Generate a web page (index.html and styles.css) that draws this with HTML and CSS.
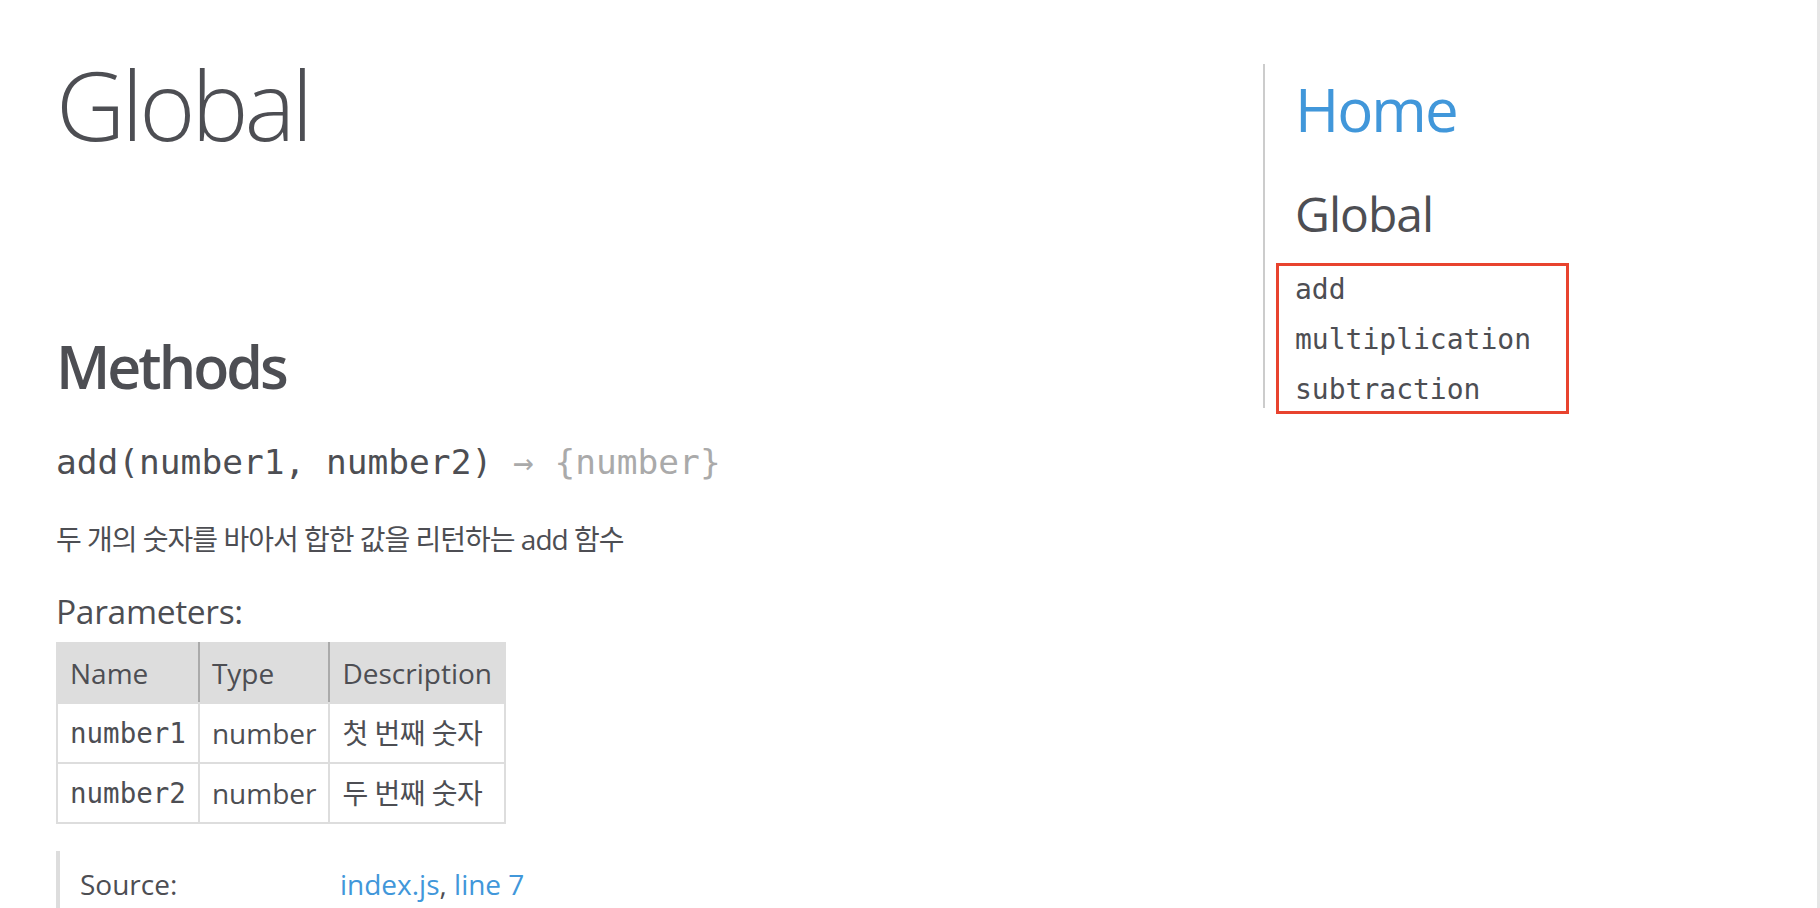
FILE: index.html
```html
<!DOCTYPE html>
<html lang="ko">
<head>
<meta charset="utf-8">
<title>JSDoc: Global</title>
<link rel="stylesheet" href="styles.css">
</head>
<body>
<div class="page">
  <div class="main">
    <h1 class="page-title">Global</h1>
    <section class="doc-section">
      <article>
        <h3 class="subsection-title">Methods</h3>
        <h4 class="name"><span class="fn">add(number1, number2)</span><span class="type-signature"> &rarr; {number}</span></h4>
        <div class="description"><p>두 개의 숫자를 바아서 합한 값을 리턴하는 add 함수</p></div>
        <h5 class="params-title">Parameters:</h5>
        <table class="params">
          <thead>
            <tr><th>Name</th><th>Type</th><th class="last">Description</th></tr>
          </thead>
          <tbody>
            <tr><td class="pname">number1</td><td>number</td><td class="ko">첫 번째 숫자</td></tr>
            <tr><td class="pname">number2</td><td>number</td><td class="ko">두 번째 숫자</td></tr>
          </tbody>
        </table>
        <dl class="details">
          <dt>Source:</dt>
          <dd><a href="#">index.js</a>, <a href="#">line 7</a></dd>
        </dl>
      </article>
    </section>
  </div>
  <nav class="side-nav">
    <h2 class="nav-home"><a href="#">Home</a></h2>
    <h3 class="nav-global">Global</h3>
    <div class="nav-list-wrap">
      <ul class="nav-list">
        <li><a href="#">add</a></li>
        <li><a href="#">multiplication</a></li>
        <li><a href="#">subtraction</a></li>
      </ul>
      <div class="annot"></div>
    </div>
  </nav>
</div>
</body>
</html>
```
FILE: styles.css
```css
html, body {
  margin: 0;
  padding: 0;
  overflow: hidden;
  background: #fff;
}

body {
  font-family: "Open Sans", "Noto Sans CJK KR", sans-serif;
  font-size: 28px;
  line-height: 1.5;
  color: #4d4e53;
}

a {
  color: #4197da;
  text-decoration: none;
}

.page {
  display: grid;
  grid-template-columns: 1255px 1fr;
  align-items: start;
  padding: 8px 0 0 8px;
  min-height: 908px;
  box-sizing: border-box;
  border-right: 3px solid #e6e6e6;
}

.page-title {
  font-family: "Open Sans", sans-serif;
  font-weight: 300;
  font-size: 96px;
  line-height: 144px;
  letter-spacing: -4px;
  margin: 24px 48px 40px;
}

.doc-section {
  padding: 24px 48px;
  margin-right: 60px;
}

.subsection-title {
  font-size: 59px;
  line-height: 90px;
  font-weight: 600;
  letter-spacing: -3px;
  margin: 81px 0 24px;
}

.name {
  font-family: "DejaVu Sans Mono", monospace;
  font-weight: normal;
  font-size: 34.5px;
  line-height: 54px;
  margin: 0 0 24px;
  color: #4d4e53;
}

.type-signature {
  color: #aaa;
}

.description {
  padding-top: 5px;
}

.description p {
  margin: 0;
  line-height: 42px;
  letter-spacing: -1px;
}

.params-title {
  font-size: 33.6px;
  line-height: 50px;
  font-weight: normal;
  letter-spacing: -0.01em;
  margin: 26px 0 6px;
}

.params {
  border-collapse: collapse;
  border-spacing: 0;
}

.params th,
.params td {
  border: 2px solid #ddd;
  padding: 8px 12px;
  text-align: left;
  vertical-align: top;
  font-weight: normal;
  line-height: 42px;
}

.params td.ko {
  letter-spacing: -0.5px;
}

.params thead tr {
  background: #ddd;
}

.params th {
  border-right: 2px solid #aaa;
}

.params th.last {
  border-right: 2px solid #ddd;
}

.params .pname {
  font-family: "DejaVu Sans Mono", monospace;
  font-size: 27.5px;
}

.details {
  display: flex;
  margin: 27px 0 0;
  border-left: 4px solid #ddd;
  line-height: 60px;
  padding: 3px 0 40px;
}

.details dt {
  width: 260px;
  padding-left: 20px;
}

.details dd {
  margin: 0;
}

.details dd a {
  color: #4197da;
}

.side-nav {
  margin-top: 56px;
  border-left: 2px solid #ccc;
  padding-left: 30px;
}

.nav-home {
  font-size: 60px;
  line-height: 90px;
  font-weight: normal;
  letter-spacing: -2px;
  margin: 0 0 24px;
}

.nav-global {
  font-size: 48px;
  line-height: 72px;
  font-weight: normal;
  letter-spacing: -1px;
  margin: 24px 0 20px;
}

.nav-list-wrap {
  position: relative;
}

.nav-list {
  list-style: none;
  margin: 0;
  padding: 0;
}

.nav-list li {
  margin-top: 12px;
  line-height: 36px;
}

.nav-list a {
  font-family: "DejaVu Sans Mono", monospace;
  font-size: 28px;
  color: #4d4e53;
}

.annot {
  position: absolute;
  top: -7px;
  left: -19px;
  width: 293px;
  height: 151px;
  box-sizing: border-box;
  border: 3px solid #e8432e;
}
```
